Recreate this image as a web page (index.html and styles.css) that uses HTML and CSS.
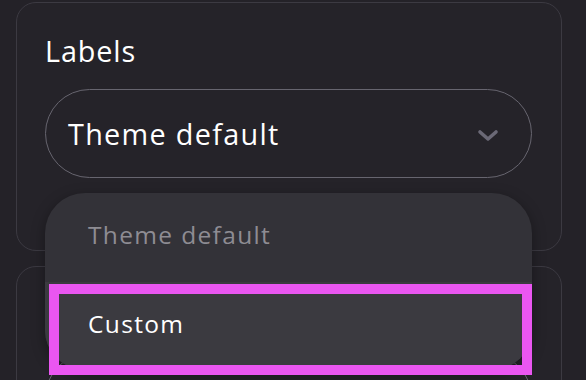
FILE: index.html
```html
<!DOCTYPE html>
<html lang="en">
<head>
<meta charset="utf-8">
<title>Labels</title>
<link rel="stylesheet" href="styles.css">
</head>
<body>
<div class="page">
  <section class="card">
    <div class="label">Labels</div>
    <div class="select-wrap">
      <div class="select">
        <span class="select-value">Theme default</span>
        <svg class="chevron" width="22" height="13" viewBox="0 0 22 13" aria-hidden="true">
          <path d="M3 3 L11 10 L19 3" fill="none" stroke="currentColor" stroke-width="3.6" stroke-linecap="round" stroke-linejoin="round"/>
        </svg>
      </div>
      <ul class="menu">
        <li class="option muted">Theme default</li>
        <li class="option active">Custom</li>
      </ul>
      <div class="focus-ring"></div>
    </div>
  </section>
  <section class="card">
    <div class="label"></div>
    <div class="select"></div>
  </section>
</div>
</body>
</html>
```

FILE: styles.css
```css
html, body {
  margin: 0;
  padding: 0;
  background: #242228;
}

body {
  font-family: "Open Sans", "DejaVu Sans", sans-serif;
  color: #ffffff;
}

.page {
  box-sizing: border-box;
  height: 380px;
  overflow: hidden;
  padding: 2px 24px 0 16px;
  display: flex;
  flex-direction: column;
  gap: 15px;
}

.card {
  flex: none;
  box-sizing: border-box;
  width: 546px;
  border: 1px solid #3c3a42;
  border-radius: 20px;
  background: #252329;
  padding: 28px 28px 72px 28px;
}

.label {
  height: 40px;
  font-size: 28.8px;
  line-height: 40px;
  letter-spacing: 0.03em;
  margin-bottom: 18px;
}

.select-wrap {
  position: relative;
}

.select {
  box-sizing: border-box;
  height: 89px;
  width: 487px;
  border: 1px solid #67656f;
  border-radius: 45px;
  display: flex;
  align-items: center;
  justify-content: space-between;
  padding: 0 32px 0 22px;
}

.select-value {
  font-size: 28.8px;
  line-height: 40px;
  letter-spacing: 0.045em;
}

.chevron {
  color: #6b6976;
  margin-top: 3px;
}

.menu {
  position: absolute;
  left: 0;
  top: 104px;
  width: 487px;
  height: 177px;
  margin: 0;
  padding: 0;
  list-style: none;
  background: #333238;
  border-radius: 40px;
  overflow: hidden;
  box-shadow: 0 4px 14px rgba(0, 0, 0, 0.35);
}

.option {
  box-sizing: border-box;
  height: 89px;
  padding: 25px 0 0 43px;
  font-size: 24.5px;
  line-height: 34px;
  letter-spacing: 0.055em;
}

.option.muted {
  color: #8e8c93;
}

.option.active {
  background: #3b3a40;
  color: #ffffff;
}

.focus-ring {
  position: absolute;
  left: 4px;
  top: 195px;
  width: 483px;
  height: 91px;
  box-sizing: border-box;
  border: 10px solid #ea56f1;
}
```
